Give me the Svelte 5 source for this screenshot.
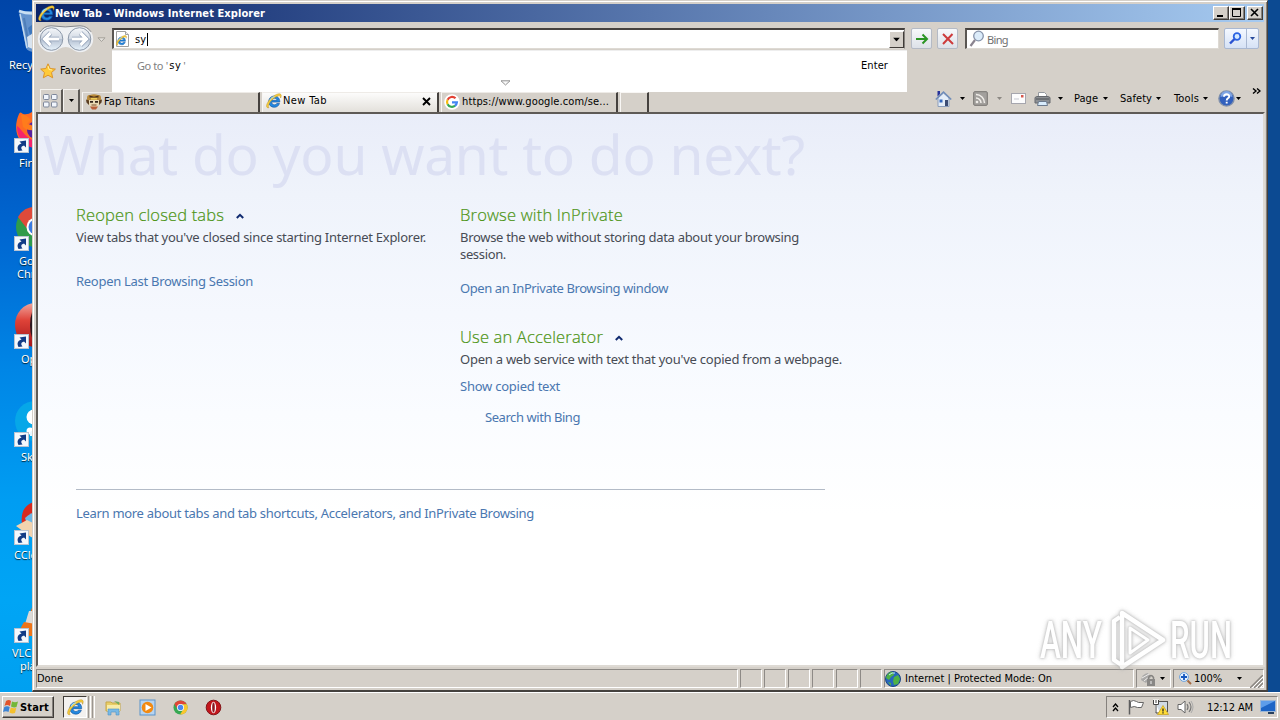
<script>
  // Spreads a label's letters so that it takes exactly the given width.
  function fit(node, width) {
    const apply = () => {
      node.style.letterSpacing = '0px';
      const natural = node.getBoundingClientRect().width;
      node.style.letterSpacing = (width - natural) / node.textContent.length + 'px';
    };
    apply();
    document.fonts.ready.then(apply);
  }

  const shortcuts = [
    { kind: 'bin', lines: [['Recy', 9]], top: 6 },
    { kind: 'firefox', lines: [['Fir', 19]], top: 104 },
    { kind: 'chrome', lines: [['Go', 19], ['Chr', 17]], top: 202 },
    { kind: 'opera', lines: [['Op', 21]], top: 300 },
    { kind: 'skype', lines: [['Sky', 21]], top: 398 },
    { kind: 'ccleaner', lines: [['CCle', 14]], top: 496 },
    { kind: 'vlc', lines: [['VLC', 12], ['pla', 20]], top: 594 }
  ];
  const menus = [
    { label: 'Page', w: 24, gap: 5, after: 12 },
    { label: 'Safety', w: 32, gap: 4, after: 13 },
    { label: 'Tools', w: 25, gap: 4, after: 10 }
  ];
</script>

{#snippet ie(size)}
  <svg class="ico" width={size} height={size} viewBox="0 0 16 16">
    <path d="M13.8 9.1H5.6c.2 1.7 1.3 2.7 2.8 2.7 1.1 0 1.9-.5 2.3-1.3h2.8c-.8 2.4-2.7 3.8-5.2 3.8-3.3 0-5.6-2.3-5.6-5.6S5 3 8.3 3c3.500 0 5.600 2.500 5.500 6.100zM5.700 7.300h5.300C10.800 5.900 9.800 5.200 8.400 5.200S6 6 5.700 7.300z" fill="#2288e0" stroke="#10509c" stroke-width=".6" />
    <path d="M3 14.700C.2 15.400-.3 12.700 2 8.900 5 4.100 10.700.2 13.800.8c2 .4 1.600 2.600.8 4.200.2-2-.8-2.500-2.700-1.900-3.300 1-7 4.400-8.800 7.900-1 2-.9 3.100-.1 3.700z" fill="#f6cd3b" stroke="#b68414" stroke-width=".4" />
    <path d="M4 7c.8-2 2.600-3.300 4.500-3.200" stroke="#9ad9ff" fill="none" />
  </svg>
{/snippet}

{#snippet arrow(color = '#000')}
  <svg class="ico" width="5" height="3" viewBox="0 0 5 3"><path d="M0 0h5L2.500 3z" fill={color} /></svg>
{/snippet}

{#snippet chromeIcon(size)}
  <svg class="ico" width={size} height={size} viewBox="0 0 32 32">
    <circle cx="16" cy="16" r="15" fill="#36a852" />
    <path d="M3 8.500A15 15 0 0 1 29 8.500L16 10 9.500 19z" fill="#e04537" />
    <path d="M29.400 9A15 15 0 0 1 15 31l7.500-12L20 9z" fill="#fbc62d" />
    <circle cx="16" cy="16" r="7.500" fill="#fff" />
    <circle cx="16" cy="16" r="5.800" fill="#4a88ee" />
  </svg>
{/snippet}

<div class="screen">
  <div class="desktop">
    {#each shortcuts as s}
      <div class="shortcut" style="top:{s.top}px">
        <div class="pic">
          <svg width="36" height="48" viewBox="0 0 36 48">
            {#if s.kind === 'bin'}
              <path d="M4 5L11 42q2 4 9 4h14V5z" fill="#8fb4dc" opacity=".7" />
              <path d="M4 5q12 5 31 0" fill="none" stroke="#c9dff2" stroke-width="2.500" />
              <path d="M5 8l7 34" stroke="#c4daee" stroke-width="1.500" />
              <path d="M9 12l5 28" stroke="#4f7fb8" stroke-width="2" />
              <path d="M12 31l8-5v18l-7-3z" fill="#d9e4ef" />
              <path d="M13 22l6-5v8l-4 4z" fill="#3f78bd" />
            {:else if s.kind === 'firefox'}
              <path d="M4 10q1-3 4 0 5 1 9-2l14 8v26H18C3 42-3 26 4 10z" fill="#ff6a24" />
              <path d="M2 22c0 14 10 24 24 22v-6C12 38 8 26 2 22z" fill="#f5246c" />
              <circle cx="21" cy="26" r="9" fill="#57219f" />
              <path d="M6 11q5-1 10 5l-4 4q8 1 8 6-8 1-12-3z" fill="#ff7c1c" />
            {:else if s.kind === 'chrome'}
              <circle cx="21" cy="25" r="20" fill="#2f9b4b" />
              <path d="M3 15A20 20 0 0 1 38 15L20 16 13 28z" fill="#df4a3a" />
              <circle cx="21" cy="25" r="9.500" fill="#fff" />
              <circle cx="21" cy="25" r="7.500" fill="#3a7be0" />
            {:else if s.kind === 'opera'}
              <defs><linearGradient id="op" x1="0" y1="0" x2="0" y2="1"><stop offset="0" stop-color="#f0a49c" /><stop offset=".4" stop-color="#de4238" /><stop offset="1" stop-color="#a3161a" /></linearGradient></defs>
              <ellipse cx="20" cy="25" rx="20" ry="22" fill="url(#op)" />
              <ellipse cx="22" cy="25" rx="7" ry="18" fill="#2b1820" />
            {:else if s.kind === 'skype'}
              <circle cx="20" cy="23" r="20" fill="#06a7e8" />
              <circle cx="19" cy="19" r="7.500" fill="#fff" />
              <circle cx="15" cy="33" r="3.500" fill="#fff" />
              <path d="M15 35q1-5 14-3v6H15z" fill="#e6f8ff" />
            {:else if s.kind === 'ccleaner'}
              <path d="M7 28C5 14 12 6 24 5v25z" fill="#d9291f" />
              <path d="M10 22q6-6 12-6v12H12z" fill="#6cb8e8" />
              <path d="M1 30l11-6 10 5v14l-6-2z" fill="#f3d3ae" />
            {:else}
              <path d="M20 6l-9 23h20z" fill="#ee7418" />
              <path d="M14 17l-4 13h20l-3-13z" fill="#dcdad7" />
              <path d="M9 28l-5 9 8 5h20V32z" fill="#ee7418" />
            {/if}
          </svg>
          {#if s.kind !== 'bin'}
            <svg class="link" width="15" height="15" viewBox="0 0 15 15">
              <rect x=".5" y=".5" width="14" height="14" fill="#f4f8fc" stroke="#b9c4d2" />
              <path d="M4.500 13C2.500 9 4 6.500 7.500 5.500L5.500 3.500 12 2.500v7L10 7.500C7 8.500 6.500 10 8.500 12.500z" fill="#123c86" />
            </svg>
          {/if}
        </div>
        {#each s.lines as [text, x]}
          <div class="name" style="padding-left:{x}px">{text}</div>
        {/each}
      </div>
    {/each}

    <div class="window">
      <div class="titlebar">
        {@render ie(17)}
        <span class="title" use:fit={210}>New Tab - Windows Internet Explorer</span>
        <div class="controls">
          <button aria-label="Minimize"><svg width="12" height="10"><path d="M2 8h6" stroke="#000" stroke-width="2" /></svg></button>
          <button aria-label="Maximize"><svg width="12" height="10"><path d="M1.500 1v7.500h8V1" fill="none" stroke="#000" /><path d="M1 1h9" stroke="#000" stroke-width="2" /></svg></button>
          <button class="x" aria-label="Close"><svg width="12" height="10"><path d="M2 1l7 7M9 1L2 8" stroke="#000" stroke-width="1.600" /></svg></button>
        </div>
      </div>

      <div class="nav">
        <svg class="backfwd" width="57" height="28" viewBox="0 0 57 28">
          <defs>
            <linearGradient id="orb" x1="0" y1="0" x2="0" y2="1">
              <stop offset="0" stop-color="#f5f7fa" /><stop offset=".48" stop-color="#d3dae4" />
              <stop offset=".5" stop-color="#b4c0d1" /><stop offset="1" stop-color="#e8f3fc" />
            </linearGradient>
          </defs>
          <path d="M14 .8Q28 3 43 .8a13 13 0 0 1 0 26.400Q38 27 35 24q-6-4-13 0-3 3-8 3.200A13 13 0 0 1 14 .8z" fill="#eef0f3" />
          <path d="M3 7Q7 1 14 .8 28 3 43 .8q7 .2 11 6" fill="none" stroke="#85878c" />
          <circle cx="14.500" cy="14" r="11.300" fill="url(#orb)" stroke="#8c98a9" />
          <circle cx="42.500" cy="14" r="11.300" fill="url(#orb)" stroke="#8c98a9" />
          <path d="M13.500 8L7.500 14l6 6M8 14H22" fill="none" stroke="#8b9bb4" stroke-width="4.600" />
          <path d="M13.500 8L7.500 14l6 6M8 14H22" fill="none" stroke="#fff" stroke-width="3.200" />
          <path d="M43.500 8L49.500 14l-6 6M49 14H35" fill="none" stroke="#8b9bb4" stroke-width="4.600" />
          <path d="M43.500 8L49.500 14l-6 6M49 14H35" fill="none" stroke="#fff" stroke-width="3.200" />
        </svg>
        <svg class="hist" width="9" height="6"><path d="M1 .8h7L4.500 4.500z" fill="#e5e2dd" stroke="#a5a19b" /></svg>
        <div class="address">
          <svg width="15" height="16" viewBox="0 0 15 16">
            <path d="M1.500.5h9l3 3v12h-12z" fill="#fff" stroke="#a0a0a0" /><path d="M10.500.5v3h3" fill="#eee" stroke="#a0a0a0" />
          </svg>
          <span class="page-e">{@render ie(11)}</span>
          <span class="typed" use:fit={11}>sy</span><i class="caret"></i>
          <div class="drop">{@render arrow()}</div>
        </div>
        <div class="sq go"><svg width="14" height="14"><path d="M1 7h11M7.500 2.500L12 7l-4.500 4.500" fill="none" stroke="#2b9524" stroke-width="2" /></svg></div>
        <div class="sq stop"><svg width="14" height="14"><path d="M2 2l10 10M11.500 2L2 12" stroke="#cd3b3b" stroke-width="2" /></svg></div>
        <div class="search">
          <svg width="16" height="18" viewBox="0 0 16 18"><circle cx="9.500" cy="6" r="4.800" fill="#dcecfa" stroke="#8794ab" stroke-width="1.300" /><path d="M6 10l-4.500 6" stroke="#8b8490" stroke-width="2.200" /></svg>
          <span use:fit={21}>Bing</span>
        </div>
        <div class="searchgo">
          <div><svg width="13" height="13"><circle cx="8" cy="4.500" r="3.300" fill="#d3e8ff" stroke="#2a62e2" stroke-width="1.800" /><path d="M5.500 7L1 11.500" stroke="#2a52d2" stroke-width="2.400" /></svg></div>
          <div class="m">{@render arrow('#274a9c')}</div>
        </div>

        <div class="suggest">
          <div class="sline"><span class="gray"><span use:fit={26}>Go to</span> '</span><span class="q" use:fit={12}>sy</span><span class="gray">'</span><span class="enter" use:fit={27}>Enter</span></div>
          <svg class="more" width="11" height="6"><path d="M1 .8h9L5.500 5z" fill="#f8f8f8" stroke="#929292" /></svg>
        </div>
      </div>

      <div class="favs">
        <svg width="16" height="16" viewBox="0 0 16 16"><path d="M8 .8l2.200 4.700 5.200.6-3.900 3.500 1.200 5.200L8 12.200l-4.700 2.600 1.200-5.200L.7 6.100l5.200-.6z" fill="#ffca38" stroke="#dc942a" /><path d="M8 3l1 3.500 3 .5" fill="none" stroke="#fff0a0" /></svg>
        <span use:fit={46}>Favorites</span>
      </div>

      <div class="tabrow">
        <div class="quick"><svg width="17" height="16" viewBox="0 0 17 16"><g fill="#f1f5fc" stroke="#7d8699"><rect x="1.500" y="1.500" width="5.500" height="5" rx="1" /><rect x="9.500" y="1.500" width="5.500" height="5" rx="1" /><rect x="1.500" y="9" width="5.500" height="5" rx="1" /><rect x="9.500" y="9" width="5.500" height="5" rx="1" /></g></svg></div>
        <div class="qmenu">{@render arrow()}</div>
        <div class="tab">
          <svg width="16" height="16" viewBox="0 0 16 16"><path d="M1 4Q1 .5 4 1q4-1.500 8 0 3-.5 3 3v3H1z" fill="#b98a3a" /><path d="M3.500 1.500l4.500 1.300 4.500-1.300v2h-9z" fill="#4a2f18" /><path d="M3 6h10v5q-5 6-10 0z" fill="#e9d9b4" /><path d="M0 5.500l3 1V11L.5 8.500zM16 5.500l-3 1V11l2.500-2.500z" fill="#5a3d22" /><path d="M4 7h3v1.700H4zM9 7h3v1.700H9z" fill="#33231a" /><path d="M4 12.500h8L10 15.500H6z" fill="#b9603b" /><path d="M5.500 11h5" stroke="#7b4a2a" /><path d="M5 4.800h6" stroke="#f0cf58" stroke-width="1.500" /></svg>
          <span use:fit={51}>Fap Titans</span>
        </div>
        <div class="tab active">
          {@render ie(16)}
          <span use:fit={44}>New Tab</span>
          <svg class="close" width="9" height="9"><path d="M1 1l7 7M8 1L1 8" stroke="#000" stroke-width="1.900" /></svg>
        </div>
        <div class="tab goog">
          <svg width="16" height="16" viewBox="0 0 16 16"><circle cx="8" cy="8" r="7.800" fill="#fff" /><g fill="none" stroke-width="2.200"><path d="M11.500 4.300A4.900 4.900 0 0 0 3.600 5.800" stroke="#e34133" /><path d="M3.600 5.700a4.900 4.900 0 0 0 0 4.600" stroke="#f5b912" /><path d="M3.600 10.200a4.900 4.900 0 0 0 7.500 1.500" stroke="#34a853" /><path d="M11 11.800a4.900 4.900 0 0 0 1.900-3.400H8" stroke="#4285f4" /></g></svg>
          <span use:fit={147}>https://www.google.com/se...</span>
        </div>
        <div class="newtab"></div>

        <div class="cmds">
          <svg width="17" height="18" viewBox="0 0 17 18"><path d="M3 8v8.500h11V8L8.500 3z" fill="#e4edf8" stroke="#8a9dbb" /><path d="M.8 9.500L8.500 2 16.200 9.500" fill="none" stroke="#6f8cb9" stroke-width="1.600" /><path d="M2.500 1h2.500v3l-2.500 2.500z" fill="#26339b" /><path d="M4.500 9.500h3v3h-3z" fill="#3467bd" /><path d="M10 10h3v6h-3z" fill="#3c4c73" /></svg>
          <span class="a1">{@render arrow()}</span>
          <svg width="15" height="15" viewBox="0 0 15 15"><rect x=".7" y=".7" width="13.600" height="13.600" rx="1" fill="#a3a09d" stroke="#777471" /><g fill="none" stroke="#f1eeea" stroke-width="1.500"><path d="M3 3.500a8.500 8.500 0 0 1 8.500 8.500M3 7a5 5 0 0 1 5 5" /></g><circle cx="4" cy="11" r="1.300" fill="#f1eeea" /></svg>
          <span class="a2">{@render arrow('#8c8883')}</span>
          <svg class="mail" width="15" height="11" viewBox="0 0 15 11"><rect x=".5" y=".5" width="14" height="10" fill="#fcfcfd" stroke="#a6a6ae" /><rect x="10" y="2" width="2.500" height="2.500" fill="#d7584d" /><path d="M3 6h5" stroke="#c7c9d1" /></svg>
          <svg class="print" width="17" height="16" viewBox="0 0 17 16"><path d="M4.500 6V1.500h6l2 2V6" fill="#fff" stroke="#95999f" /><path d="M1 6.500l2-1h11l2 1V12H1z" fill="#8d9094" stroke="#66696e" /><path d="M2 8h13" stroke="#4f5257" /><path d="M4.500 10.500h8l1 4h-10z" fill="#d9ecfc" stroke="#6c7a8d" /></svg>
          <span class="a3">{@render arrow()}</span>
          {#each menus as m}
            <span use:fit={m.w}>{m.label}</span>
            <span class="ma" style="padding:0 {m.after}px 0 {m.gap}px">{@render arrow()}</span>
          {/each}
          <svg width="17" height="17" viewBox="0 0 17 17"><circle cx="8.500" cy="8.500" r="7.600" fill="#3260bd" stroke="#8090ab" stroke-width="1.400" /><path d="M2.500 7a6 6 0 0 1 12 0q-6-2-12 0z" fill="#7fa5e5" /><path d="M6 6.700c0-3.400 5.200-3.200 5.200-.3 0 2-2.500 1.900-2.500 4M8.700 11.700v1.900" fill="none" stroke="#fff" stroke-width="1.900" /></svg>
          <span class="a4">{@render arrow()}</span>
          <svg class="chev" width="9" height="7"><path d="M1 .5l3 2.500-3 2.500M5 .5l3 2.500-3 2.500" fill="none" stroke="#000" stroke-width="1.400" /></svg>
        </div>
      </div>

      <main>
        <h1><span use:fit={762}>What do you want to do next?</span></h1>
        <div class="cols">
          <section>
            <h2><span use:fit={148}>Reopen closed tabs</span><svg width="8" height="6"><path d="M.8 5L4 1.800 7.200 5" fill="none" stroke="#102a70" stroke-width="2" /></svg></h2>
            <p><span use:fit={350}>View tabs that you've closed since starting Internet Explorer.</span></p>
            <div class="lnk l1"><span use:fit={177}>Reopen Last Browsing Session</span></div>
          </section>
          <section>
            <h2><span use:fit={163}>Browse with InPrivate</span></h2>
            <p><span use:fit={339}>Browse the web without storing data about your browsing</span><br /><span use:fit={46}>session.</span></p>
            <div class="lnk l2"><span use:fit={208}>Open an InPrivate Browsing window</span></div>
            <h2 class="second"><span use:fit={143}>Use an Accelerator</span><svg width="8" height="6"><path d="M.8 5L4 1.800 7.200 5" fill="none" stroke="#102a70" stroke-width="2" /></svg></h2>
            <p><span use:fit={382}>Open a web service with text that you've copied from a webpage.</span></p>
            <div class="lnk l3"><span use:fit={100}>Show copied text</span></div>
            <div class="lnk l4"><span use:fit={95}>Search with Bing</span></div>
          </section>
        </div>
        <footer class="lnk"><span use:fit={458}>Learn more about tabs and tab shortcuts, Accelerators, and InPrivate Browsing</span></footer>
      </main>

      <div class="status">
        <div class="pane done"><span use:fit={26}>Done</span></div>
        {#each Array(6) as _}<div class="pane tiny"></div>{/each}
        <div class="pane zone">
          <svg width="16" height="16" viewBox="0 0 16 16"><circle cx="8" cy="8" r="7.500" fill="#2667bd" stroke="#1d4683" /><path d="M2 4q3-4 6-3l1 3-3 2-2 3-3-2zM9 6l4-2 2 4-2 5-4 1-1-4zM3 11l3 1v3z" fill="#4fb245" /><path d="M4 4q3-3 6-2" stroke="#c0e8ff" fill="none" /></svg>
          <span use:fit={147}>Internet | Protected Mode: On</span>
        </div>
        <div class="pane priv">
          <svg width="18" height="16" viewBox="0 0 18 16"><path d="M1 9q1-6 7-7l3 4-5 6z" fill="#aaa9a8" /><path d="M2 7l7-4M4 10l6-5" stroke="#efedeb" /><path d="M8.500 9V6.500q2.500-4 5 0V9" fill="none" stroke="#84827f" stroke-width="1.500" /><rect x="7" y="8" width="8" height="7" fill="#898785" /><path d="M11 10v3" stroke="#eee" /></svg>
          {@render arrow()}
        </div>
        <div class="pane zoom">
          <svg width="13" height="13" viewBox="0 0 13 13"><circle cx="5" cy="5" r="4.400" fill="#e8f3ff" stroke="#6aa1dd" /><path d="M5 2v6M2 5h6" stroke="#1558c0" stroke-width="1.800" /><path d="M8.500 8.500l3.500 3.500" stroke="#a46a42" stroke-width="2" /></svg>
          <span use:fit={28}>100%</span>
          {@render arrow()}
        </div>
        <svg class="grip" width="13" height="13"><path d="M0 13L13 0M4 13l9-9M8 13l5-5" stroke="#8a8681" stroke-width="1.500" /><path d="M2 13L13 2M6 13l7-7M10 13l3-3" stroke="#fff" /></svg>
      </div>
    </div>

    <svg class="brand" width="230" height="84" viewBox="0 0 230 84">
      <g fill="#fff" font-family="Roboto, sans-serif" font-size="51" font-weight="500">
        <text x="8" y="54" textLength="62" lengthAdjust="spacingAndGlyphs">ANY</text>
        <text x="138" y="54" textLength="62" lengthAdjust="spacingAndGlyphs">RUN</text>
      </g>
      <g fill="none" stroke="#fff" stroke-width="4.500" stroke-linejoin="round">
        <path d="M88 13l-6 4v39l9 6" />
        <path d="M90 9v54l41-27z" />
        <path d="M98 24v25l18-13z" stroke-width="3" />
      </g>
    </svg>
  </div>

  <div class="taskbar">
    <div class="start">
      <svg width="16" height="16" viewBox="0 0 16 16"><path d="M3 2q3-2 5 0L7 7Q4 5 1.500 7z" fill="#e2532a" /><path d="M9 2.500q3 1.500 6 0L13.500 8Q11 9 8 7.500z" fill="#74b739" /><path d="M1.300 8Q4 6.500 6.700 8l-1.200 5Q3 11.500 0 13z" fill="#3b83d4" /><path d="M7.800 8.500q3 1.500 5.500.3L12 14q-3 1-5.500-.5z" fill="#f4c02e" /></svg>
      <span use:fit={29}>Start</span>
    </div>
    <div class="task"><div class="on">{@render ie(17)}</div><i></i><i></i></div>
    <div class="pins">
      <svg width="17" height="17" viewBox="0 0 17 17"><path d="M1 3h5l1 1h8v8H1z" fill="#e9cd66" stroke="#c6a748" /><path d="M2 6h13v6H2z" fill="#f8eba8" /><path d="M3 10h11v6h-3v-3H6v3H3z" fill="#78b9e5" stroke="#4f91c4" stroke-width=".6" /><path d="M9 2l5 1v3" fill="#72ad5c" /></svg>
      <svg width="17" height="17" viewBox="0 0 17 17"><rect x="1" y="1" width="15" height="15" fill="#b7d4f0" stroke="#5a93cb" /><circle cx="8.500" cy="8.500" r="5.800" fill="#f28a12" /><path d="M6.500 5l6 3.500-6 3.500z" fill="#fff" /></svg>
      {@render chromeIcon(15)}
      <svg width="17" height="17" viewBox="0 0 17 17"><circle cx="8.500" cy="8.500" r="7.300" fill="#c3161c" stroke="#81161a" /><ellipse cx="8.500" cy="8.500" rx="2.600" ry="5.700" fill="#fff" /><ellipse cx="8.500" cy="8.500" rx="1.300" ry="5" fill="#8c1820" /></svg>
    </div>
    <div class="tray">
      <svg width="7" height="9"><path d="M1 4l2.500-3L6 4M1 8l2.500-3L6 8" fill="none" stroke="#000" stroke-width="1.300" /></svg>
      <svg class="flag" width="17" height="16" viewBox="0 0 17 16"><path d="M1.500 1v14.500" stroke="#5e5e5e" stroke-width="1.500" /><path d="M2.500 2.500q3-2 6 0l2 1h5l-2 5h-4q-3-2-7 0z" fill="#fff" stroke="#666" /></svg>
      <svg class="net" width="16" height="16" viewBox="0 0 16 16"><rect x="3.500" y="2.500" width="11" height="10" fill="#d0dae5" stroke="#555" /><path d="M1 1.500h4v3.500H1zM3 5v7q1 2 4 2" fill="#fff" stroke="#fff" stroke-width="2" /><path d="M.5 1v4.500h5V1M3 1v3M3 6v8h4" fill="none" stroke="#444" /><path d="M10 6.500l5.500 9h-11z" fill="#ffdc35" stroke="#c69d16" stroke-width=".7" /><path d="M10 9.500v3M10 13.300v1.200" stroke="#222" stroke-width="1.300" /></svg>
      <svg class="vol" width="17" height="16" viewBox="0 0 17 16"><path d="M1 5.500h3L8 2v12l-4-3.500H1z" fill="#fff" stroke="#666" /><path d="M10 5q2 3 0 6M12 3q4 5 0 10" fill="none" stroke="#777" stroke-width="1.200" /><path d="M14 2q4 6 0 12" fill="none" stroke="#aaa" /></svg>
      <span class="clock" use:fit={46}>12:12 AM</span>
      <svg class="desk" width="16" height="14" viewBox="0 0 16 14"><rect x=".5" y=".5" width="15" height="11" fill="#1d65c6" stroke="#9db7d5" /><path d="M1 1h14L1 8z" fill="#5d9dea" /><path d="M8 13h6" stroke="#27405e" stroke-width="2" /></svg>
    </div>
  </div>
</div>

<style>
  :global(body) { margin: 0; overflow: hidden; }
  .screen, .screen * { box-sizing: border-box; }
  .screen {
    width: 1280px; height: 720px; display: flex; flex-direction: column;
    font: 11px/14px "DejaVu Sans Condensed", "DejaVu Sans", sans-serif; color: #000; background: #d5d0c9;
  }
  span { white-space: pre; }
  svg { flex: none; display: block; }
  .desktop {
    height: 692px; position: relative; overflow: hidden;
    background: linear-gradient(90deg, transparent 1200px, #0c4a92 1201px),
      linear-gradient(#0045a8 0, #0050ba 110px, #0068d2 240px, #0086e6 370px, #009df2 500px, #00a5f5 600px, #00a0f0 692px);
  }
  .shortcut { position: absolute; left: 0; width: 60px; color: #fff; font: 11px/13px "Noto Sans", sans-serif; text-shadow: 0 1px 1px #023; }
  .pic { position: relative; height: 52px; padding-left: 15px; }
  .link { position: absolute; left: 14px; top: 34px; }
  .name { white-space: nowrap; }

  .window {
    position: absolute; left: 32px; top: 0; width: 1236px; height: 692px; background: #d5d0c9;
    border: 1px solid #d5d0c9; border-right-color: #45413e; border-bottom: 2px solid #45413e;
    box-shadow: inset 1px 1px #fff, inset -1px 0 #85817d; padding: 3px 3px 0; display: flex; flex-direction: column;
  }
  .titlebar {
    height: 18px; flex: none; display: flex; align-items: center; padding: 0 1px 0 2px;
    background: linear-gradient(90deg, #0a246a, #a6caf0);
  }
  .title { color: #fff; font-weight: bold; padding-top: 1px; }
  .controls { margin-left: auto; display: flex; gap: 0; }
  button {
    width: 16px; height: 14px; padding: 1px 1px; border: 1px solid; border-color: #fff #403c38 #403c38 #fff;
    background: #d5d0c9; box-shadow: inset -1px -1px #85817d; border-radius: 0;
  }
  .x { margin-left: 2px; }
  .nav { height: 36px; flex: none; display: flex; position: relative; align-items: flex-start; padding-top: 3px; }
  .backfwd { margin-left: 1px; }
  .hist { margin: 12px 6px 0 3px; }
  .address {
    width: 793px; height: 21px; margin-top: 3px; background: #fff; border: 1px solid #85817d; border-top: 2px solid #45413e;
    border-left: 2px solid #5a5652; border-bottom: 1px solid #dedad4; display: flex; align-items: center; padding-left: 1px;
  }
  .page-e { width: 11px; margin-left: -14px; padding-top: 2px; }
  .typed { margin-left: 8px; padding-top: 2px; }
  .caret { width: 1px; height: 13px; background: #000; margin-left: 1px; }
  .drop { margin-left: auto; width: 15px; height: 17px; display: grid; place-items: center; background: #d5d0c9; border: 1px solid; border-color: #fff #403c38 #403c38 #fff; }
  .drop :global(svg) { transform: scale(1.400); }
  .sq { width: 21px; height: 21px; margin: 3px 0 0 6px; display: grid; place-items: center; border: 1px solid #b4bac5; border-radius: 2px; background: linear-gradient(#f7f9fb, #dde1e8); }
  .go { margin-left: 6px; }
  .sq.stop { margin-left: 5px; }
  .search {
    width: 254px; height: 21px; margin: 3px 0 0 7px; display: flex; align-items: center; background: #fff;
    border: 1px solid #dedad4; border-top: 2px solid #45413e; border-left: 2px solid #5a5652; padding-left: 2px;
    color: #6f6f6f; font-family: "Noto Sans", sans-serif; gap: 2px;
  }
  .search span { padding-top: 2px; }
  .searchgo { margin: 3px 0 0 5px; width: 35px; height: 21px; display: flex; border: 1px solid #a9b8d2; border-radius: 2px; background: linear-gradient(#f4f8ff, #d6e2f6); }
  .searchgo div { width: 21px; display: grid; place-items: center; }
  .searchgo .m { width: 12px; border-left: 1px solid #a9b8d2; }
  .suggest {
    position: absolute; left: 76px; top: 28px; width: 795px; height: 42px; background: #fff; z-index: 3; border-top: 1px solid #eee;
    display: flex; flex-direction: column; align-items: center;
  }
  .sline { width: 100%; height: 30px; padding: 0 19px 0 25px; display: flex; align-items: center; }
  .gray { color: #828282; font-family: "Noto Sans", sans-serif; }
  .q { margin: 0 2px 0 1px; }
  .enter { margin-left: auto; }
  .more { margin: -1px 0 0 -8px; }
  .favs { height: 30px; flex: none; display: flex; align-items: center; gap: 4px; padding-left: 4px; padding-bottom: 5px; }
  .favs { padding-top: 1px; }
  .tabrow { height: 24px; flex: none; display: flex; align-items: stretch; padding-left: 4px; }
  .quick, .qmenu { margin-top: 1px; border: 1px solid #f5f3f0; border-right: 2px solid #5d5955; border-bottom: 0; display: grid; place-items: center; }
  .quick { width: 23px; padding-right: 1px; }
  .qmenu { width: 17px; padding-bottom: 2px; }
  .tab { width: 178px; margin-left: 2px; margin-top: 4px; border-top: 1px solid #eeebe7; border-left: 1px solid #f8f6f4; border-right: 2px solid #45413e; display: flex; align-items: center; gap: 2px; padding: 0 0 2px 3px; }
  .tab.active { width: 177px; background: linear-gradient(#fcfcfb, #e3e0db); padding-bottom: 3px; gap: 1px; }
  .close { margin-left: auto; margin-right: 6px; }
  .tab.goog { gap: 2px; padding-bottom: 2px; padding-left: 2px; width: 177px; }
  .newtab { width: 29px; margin: 4px 0 0 2px; border: 1px solid #f8f6f4; border-bottom: 0; border-right: 2px solid #45413e; }
  .cmds { margin-left: auto; display: flex; align-items: center; padding-bottom: 3px; }
  .a1 { padding: 0 8px; }
  .a2 { padding: 0 9px; }
  .print { margin-left: 8px; }
  .a3 { padding: 0 11px 0 7px; }
  .a4 { padding: 0 11px 0 1px; }
  .chev { margin: -14px 3px 0 0; }

  main {
    height: 555px; flex: none; border: 2px solid; border-color: #5e5a56 #dedad4 #dedad4 #5e5a56; margin: 0 -1px 0 0;
    background: linear-gradient(#e9edf9 0, #eff3fb 80px, #f5f8fe 200px, #fafcff 300px, #fff 400px);
    font-family: "Noto Sans", sans-serif; overflow: hidden;
  }
  h1 { margin: 0; height: 89px; padding-left: 5px; font-size: 55px; line-height: 80px; font-weight: 400; color: #dce0f3; }
  .cols { display: grid; grid-template-columns: 384px 400px; padding-left: 38px; height: 286px; font-size: 13px; line-height: 17px; color: #474b54; }
  h2 { margin: 0 0 4px; padding-top: 2px; height: 22px; font: 300 16.500px/22px "Open Sans", "Noto Sans", sans-serif; color: #4c9414; display: flex; align-items: center; gap: 12px; -webkit-text-stroke: .2px #4c9414; }
  h2 svg { margin-top: 1px; }
  p { margin: 0; }
  .lnk { color: #4a77b0; font-size: 13px; line-height: 17px; }
  .l1 { margin-top: 27px; }
  .l2 { margin-top: 17px; }
  .second { margin-top: 28px; }
  .l3 { margin-top: 10px; }
  .l4 { margin: 14px 0 0 25px; }
  footer { width: 749px; margin-left: 38px; border-top: 1px solid #b3bbc7; padding-top: 15px; }

  .status { height: 21px; margin-top: 2px; flex: none; display: flex; gap: 2px; position: relative; padding-bottom: 2px; }
  .pane { border: 1px solid; border-color: #8e8a86 #fff #fff #8e8a86; display: flex; align-items: center; }
  .pane span { padding-top: 1px; }
  .done { width: 702px; }
  .tiny { width: 22px; }
  .zone { flex: 1; gap: 4px; }
  .priv { width: 35px; padding-left: 3px; gap: 2px; }
  .zoom { width: 91px; padding-left: 5px; gap: 2px; }
  .zoom > :global(svg:last-child) { margin-left: 13px; }
  .grip { position: absolute; right: 1px; bottom: 2px; }
  .brand { position: absolute; left: 1032px; top: 604px; filter: drop-shadow(0 0 1px #9c9c9c) drop-shadow(0 0 2px #b5b5b5); opacity: .7; }

  .taskbar { height: 28px; display: flex; align-items: center; border-top: 1px solid #fff; padding: 2px 2px 1px; background: #d5d0c9; }
  .start { width: 52px; height: 22px; display: flex; align-items: center; gap: 1px; padding-left: 0; font-weight: bold; border: 1px solid; border-color: #fff #403c38 #403c38 #fff; box-shadow: inset -1px -1px #85817d; }
  .start span { padding-top: 1px; }
  .task { margin-left: 9px; height: 22px; display: flex; gap: 1px; }
  .task i { width: 3px; border-right: 1px solid #fff; border-left: 1px solid #9a958f; }
  .on { width: 24px; display: grid; place-items: center; background: #f3f1ef; border: 1px solid; border-color: #403c38 #fff #fff #403c38; }
  .pins { display: flex; align-items: center; gap: 17px; margin-left: 10px; }
  .tray { margin-left: auto; width: 172px; height: 22px; border: 1px solid; border-color: #85817d #fff #fff #85817d; display: flex; align-items: center; padding-left: 5px; }
  .flag { margin-left: 9px; }
  .net { margin-left: 8px; }
  .vol { margin-left: 8px; }
  .clock { margin-left: 13px; padding-top: 1px; }
  .desk { margin-left: 7px; }
</style>
